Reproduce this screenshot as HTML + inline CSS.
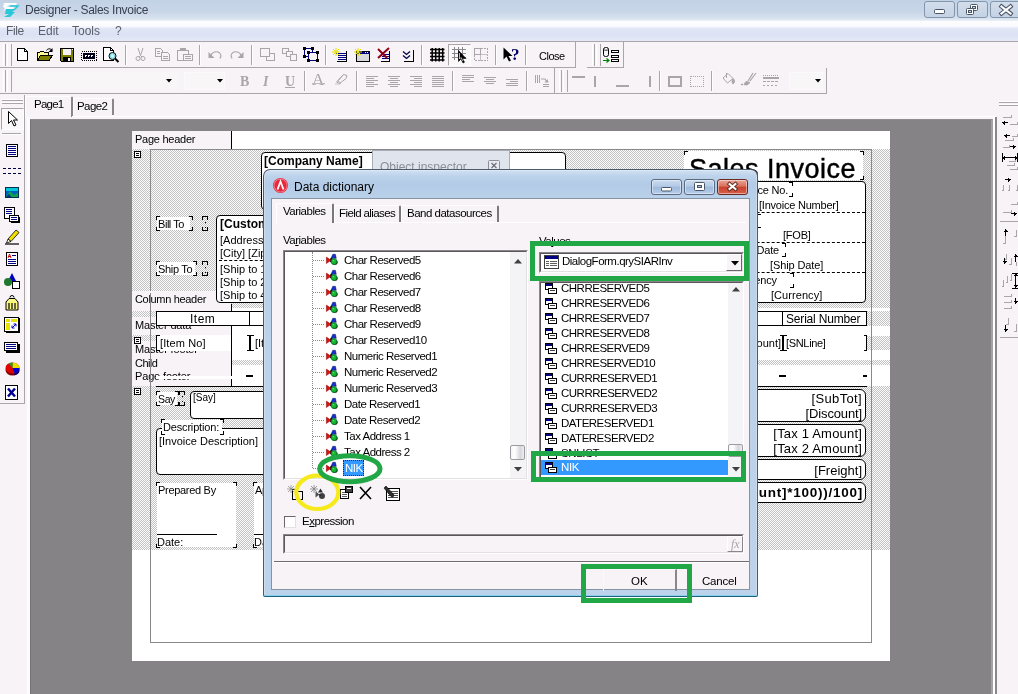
<!DOCTYPE html>
<html>
<head>
<meta charset="utf-8">
<title>Designer - Sales Invoice</title>
<style>
*{box-sizing:border-box;margin:0;padding:0}
html,body{width:1018px;height:694px;overflow:hidden}
body{position:relative;background:#f7f3f6;font-family:"Liberation Sans",sans-serif;font-size:11px;color:#000}
.a{position:absolute}
.t{position:absolute;white-space:nowrap;line-height:1}
.hatch{background-color:#dfdfdf;background-image:repeating-conic-gradient(#c2c2c2 0 25%,#fcfcfc 0 50%);background-size:2px 2px}
svg{position:absolute;overflow:visible}
/* ---------- main chrome ---------- */
#title{left:0;top:0;width:1018px;height:21px;background:linear-gradient(#c2d2e5 0,#c8d6e8 55%,#d9e3ef 90%,#eef2f8 100%)}
#menu{left:0;top:21px;width:1018px;height:20px;background:linear-gradient(#fdfdff 0,#fafbfe 5px,#e0e5f5 8px,#dce2f4 14px,#e4e8f6 19px)}
#tb1{left:0;top:41px;width:1018px;height:27px;border-top:1px solid #a9a5a9}
#tb2{left:0;top:68px;width:1018px;height:25px}
#canvas{left:30px;top:119px;width:963px;height:575px;background:#858385;border-top:1px solid #8f8d8f;border-left:1px solid #757375;border-right:2px solid #a4a2a4}
#page{left:132px;top:131px;width:758px;height:530px;background:#fff}
.sep{position:absolute;width:2px;border-left:1px solid #a9a5a9;border-right:1px solid #fff}
.grip{position:absolute;width:3px;border-left:1px solid #fff;border-right:1px solid #a9a5a9}
.grip:after{content:"";position:absolute;left:3px;top:0;bottom:0;width:3px;border-left:1px solid #fff;border-right:1px solid #a9a5a9}
.wb{top:1px;width:31px;height:17px;border:1px solid #8496ac;border-radius:3px;background:linear-gradient(#d3deec,#c4d2e4)}

/* ---------- report page ---------- */
.lb{position:absolute;left:132px;width:99px;height:18px;background:#f7f3f6}
.lb span{position:absolute;left:3px;top:3px;font-size:11px;letter-spacing:-.25px;white-space:nowrap;line-height:1}
.vl{position:absolute;left:231px;width:1px;background:#000}
.rt{position:absolute;white-space:nowrap;line-height:1;font-size:11px}
.wbx{position:absolute;background:#fff}
.rbx{position:absolute;background:#fff;border:1px solid #000;border-radius:4px}
.eq{position:absolute;left:134px;width:7px;height:7px;border:1px solid #000;background:#fff;box-sizing:border-box}
.eq:after{content:"";position:absolute;left:1px;top:1px;width:3px;height:3px;border-top:1px solid #000;border-bottom:1px solid #000;box-sizing:border-box}
.ck{position:absolute;width:4px;height:4px;border:0 solid #000}
/* ---------- dialog ---------- */
.dt{position:absolute;white-space:nowrap;line-height:1;font-size:11.500px;letter-spacing:-.5px}
.sunk{position:absolute;border:1px solid;border-color:#8a868a #fff #fff #8a868a}
.sunk:before{content:"";position:absolute;left:0;top:0;right:0;bottom:0;border:1px solid;border-color:#5a565a #e4e0e4 #e4e0e4 #5a565a}
.dtab{position:absolute;border-left:1px solid #fff;border-top:1px solid #fff;border-right:2px solid #7a767a;border-radius:2px 2px 0 0}
.cbtn{position:absolute;top:179px;height:16px;border:1px solid #5a6b80;border-radius:3px;box-shadow:0 0 0 1px rgba(255,255,255,.45) inset}
.ann{position:absolute;border:5px solid #22a746}

#dlg{left:263px;top:169px;width:495px;height:428px;border:1px solid #4a5a6c;border-bottom-color:#1f5f7a;border-radius:7px 7px 2px 2px;background:linear-gradient(#d2e1f2 0,#bdd3eb 6px,#b3cbe7 14px,#bad1ea 30px,#bdd3ec 100%);box-shadow:0 0 0 1px rgba(255,255,255,.25) inset,0 -1px 0 #5cc4ea inset}
#dcl{left:271px;top:198px;width:479px;height:392px;background:#f7f3f6;border:1px solid #8593a3}
</style>
</head>
<body>
<div id="root" style="position:absolute;left:0;top:0;width:1018px;height:694px;will-change:transform">
<!-- ============ TITLE BAR ============ -->
<div class="a" id="title"></div>
<div class="t" style="left:25px;top:4px;font-size:12px;color:#3a4050;letter-spacing:-.29px">Designer - Sales Invoice</div>

<!-- window buttons -->
<div class="a wb" style="left:924px"></div><div class="a wb" style="left:957px"></div><div class="a wb" style="left:990px;width:32px"></div>
<svg style="left:934px;top:9px" width="12" height="6"><rect x=".5" y=".5" width="10" height="4" rx="1" fill="#fff" stroke="#4a5566"/></svg>
<svg style="left:966px;top:4px" width="13" height="12"><rect x="4.5" y=".5" width="7" height="6" rx="1" fill="#fff" stroke="#4a5566"/><rect x="6.5" y="2.5" width="3" height="2" fill="#c9d6e6" stroke="#4a5566"/><rect x=".5" y="4.5" width="7" height="6" rx="1" fill="#fff" stroke="#4a5566"/><rect x="2.5" y="6.5" width="3" height="2" fill="#c9d6e6" stroke="#4a5566"/></svg>
<svg style="left:1000px;top:5px" width="12" height="10"><path d="M1.500 1.500l9 7M10.500 1.500l-9 7" stroke="#4a5566" stroke-width="4.200" stroke-linecap="square"/><path d="M1.500 1.500l9 7M10.500 1.500l-9 7" stroke="#fff" stroke-width="2.200" stroke-linecap="square"/></svg>
<!-- app icon -->
<svg style="left:1px;top:1px" width="20" height="18" viewBox="0 0 20 18"><path d="M3 2h13l-1 2H8l-2 2h7l-1 2H5l-3 3 2-4-2-1z" fill="#fff" opacity=".9"/><path d="M5 8h10l-4 3h3l-5 5H3l5-3H4z" fill="#27c9d8"/><path d="M9 5h8l-3 3" fill="none" stroke="#27c9d8" stroke-width="1.500"/></svg>
<!-- ============ MENU ============ -->
<div class="a" id="menu"></div>
<div class="t" style="left:6px;top:25px;font-size:12px;color:#5a5f6a;letter-spacing:-.4px">File</div>
<div class="t" style="left:38px;top:25px;font-size:12px;color:#5a5f6a">Edit</div>
<div class="t" style="left:72px;top:25px;font-size:12px;color:#5a5f6a">Tools</div>
<div class="t" style="left:115px;top:25px;font-size:12px;color:#5a5f6a">?</div>
<!-- ============ TOOLBARS ============ -->
<div class="a" id="tb1"></div>
<div class="a" id="tb2"></div>

<!-- row1 frames -->
<div class="a" style="left:0;top:67px;width:576px;height:1px;background:#a9a5a9"></div>
<div class="a" style="left:575px;top:42px;width:1px;height:26px;background:#a9a5a9"></div>
<div class="a" style="left:587px;top:67px;width:37px;height:1px;background:#a9a5a9"></div>
<div class="a" style="left:623px;top:42px;width:1px;height:26px;background:#a9a5a9"></div>
<div class="a" style="left:0;top:93px;width:827px;height:1px;background:#a9a5a9"></div>
<div class="a" style="left:554px;top:68px;width:1px;height:25px;background:#a9a5a9"></div>
<div class="a" style="left:826px;top:68px;width:1px;height:26px;background:#a9a5a9"></div>
<div class="grip" style="left:3px;top:44px;height:22px"></div>
<div class="grip" style="left:3px;top:70px;height:22px"></div>
<div class="grip" style="left:592px;top:44px;height:22px"></div>
<div class="grip" style="left:559px;top:70px;height:22px"></div>
<!-- row1 separators -->
<div class="sep" style="left:125px;top:45px;height:20px"></div>
<div class="sep" style="left:199px;top:45px;height:20px"></div>
<div class="sep" style="left:251px;top:45px;height:20px"></div>
<div class="sep" style="left:325px;top:45px;height:20px"></div>
<div class="sep" style="left:421px;top:45px;height:20px"></div>
<div class="sep" style="left:495px;top:45px;height:20px"></div>
<div class="sep" style="left:525px;top:45px;height:20px"></div>
<!-- row2 separators -->
<div class="sep" style="left:304px;top:71px;height:20px"></div>
<div class="sep" style="left:356px;top:71px;height:20px"></div>
<div class="sep" style="left:452px;top:71px;height:20px"></div>
<div class="sep" style="left:526px;top:71px;height:20px"></div>
<div class="sep" style="left:659px;top:71px;height:20px"></div>
<div class="sep" style="left:711px;top:71px;height:20px"></div>
<!-- ROW1 ICONS -->
<svg style="left:17px;top:48px" width="12" height="14" shape-rendering="crispEdges"><path d="M.5.5h7l3 3v9h-10z" fill="#fff" stroke="#000"/><path d="M7.500.5v3h3" fill="none" stroke="#000"/></svg>
<svg style="left:37px;top:47px" width="17" height="15" shape-rendering="crispEdges"><path d="M.5 13.500v-8h2l1-1h3l1 1h4v2" fill="#ffff99" stroke="#000"/><path d="M.5 13.500l3-5h12l-3.500 5z" fill="#808000" stroke="#000"/><path d="M9.500 3.500c1-2 4-2.500 5.500 0" fill="none" stroke="#000" shape-rendering="auto"/><path d="M15.500 1v4h-4z" fill="#000" shape-rendering="auto"/></svg>
<svg style="left:60px;top:48px" width="15" height="15" shape-rendering="crispEdges"><path d="M.5.5h13v13h-12l-1-1z" fill="#808000" stroke="#000"/><rect x="3" y="1" width="8" height="6" fill="#f7f3f6"/><rect x="3" y="9" width="8" height="5" fill="#000"/><rect x="8" y="10" width="2" height="3" fill="#f7f3f6"/><rect x="12" y="1" width="1" height="1" fill="#f7f3f6"/></svg>
<svg style="left:81px;top:51px" width="16" height="10" shape-rendering="crispEdges"><rect x=".5" y=".5" width="15" height="9" fill="none" stroke="#000" stroke-dasharray="1 1"/><rect x="2" y="2" width="12" height="6" fill="#000018"/><path d="M4 6v-2h2M7 6v-2h2M10 6v-2h2" stroke="#fff" fill="none"/></svg>
<svg style="left:103px;top:47px" width="17" height="16"><path d="M.5.5h7l3 3v10h-10z" fill="#fff" stroke="#000" shape-rendering="crispEdges"/><path d="M7.500.5v3h3" fill="none" stroke="#000" shape-rendering="crispEdges"/><circle cx="9.500" cy="9" r="3.500" fill="#c8f4f4" stroke="#000"/><circle cx="9.500" cy="9" r="2.300" fill="none" stroke="#58c8d8" stroke-width=".8"/><path d="M12 11.500l3.500 3.500" stroke="#000" stroke-width="2"/></svg>
<!-- cut copy paste (disabled) -->
<svg style="left:136px;top:48px" width="10" height="14" fill="none" stroke="#a9a5a9"><path d="M2 0l2.500 7.500M7 0l-2.500 7.500"/><circle cx="2" cy="10.500" r="2"/><circle cx="7" cy="10.500" r="2"/><path d="M4.500 7.500l-1.500 1.500M4.500 7.500l1.500 1.500"/></svg>
<svg style="left:155px;top:48px" width="16" height="14" shape-rendering="crispEdges" fill="none" stroke="#a9a5a9"><path d="M.5.5h5l2 2v6h-7z"/><path d="M2 3.500h3M2 5.500h3"/><path d="M6.500 4.500h6l2 2v6h-8z" fill="#f7f3f6"/><path d="M8 8.500h5M8 10.500h5"/></svg>
<svg style="left:177px;top:48px" width="17" height="14" shape-rendering="crispEdges" fill="none" stroke="#a9a5a9"><path d="M.5 2.500h11v10h-11z"/><path d="M3.500 2.500v-2h5v2" stroke-width="1"/><rect x="3" y="1" width="6" height="2" fill="#a9a5a9" stroke="none"/><path d="M6.500 6.500h9v6h-9z" fill="#f7f3f6"/><path d="M8 8.500h6M8 10.500h6"/></svg>
<!-- undo redo -->
<svg style="left:208px;top:50px" width="14" height="9" fill="none" stroke="#a9a5a9"><path d="M3 5c2-4 9-5 10 1l-1 2.500" stroke-width="1.200"/><path d="M.5 2v6h6z" fill="#a9a5a9" stroke="none"/></svg>
<svg style="left:230px;top:50px" width="14" height="9" fill="none" stroke="#a9a5a9"><path d="M11 5c-2-4-9-5-10 1l1 2.500" stroke-width="1.200"/><path d="M13.500 2v6h-6z" fill="#a9a5a9" stroke="none"/></svg>
<!-- bring front / send back (disabled) -->
<svg style="left:260px;top:48px" width="16" height="14" shape-rendering="crispEdges" fill="#f7f3f6" stroke="#a9a5a9"><rect x="6.500" y="5.500" width="8" height="7"/><rect x=".5" y=".5" width="9" height="8"/><rect x="2.500" y="2.500" width="5" height="4" stroke="none"/></svg>
<svg style="left:282px;top:48px" width="16" height="14" shape-rendering="crispEdges" fill="#f7f3f6" stroke="#a9a5a9"><rect x=".5" y=".5" width="6" height="5"/><rect x="4.500" y="3.500" width="6" height="5"/><rect x="8.500" y="6.500" width="6" height="6"/></svg>
<!-- select all -->
<svg style="left:303px;top:47px" width="17" height="16" shape-rendering="crispEdges"><rect x="1.500" y="1.500" width="8" height="8" fill="none" stroke="#000080"/><rect x="5.500" y="5.500" width="9" height="8" fill="#f7f3f6" stroke="#000080"/><g fill="#000"><rect x="0" y="0" width="3" height="3"/><rect x="8" y="0" width="3" height="3"/><rect x="0" y="8" width="3" height="3"/><rect x="4" y="4" width="3" height="3"/><rect x="13" y="4" width="3" height="3"/><rect x="4" y="12" width="3" height="3"/><rect x="13" y="12" width="3" height="3"/></g></svg>
<!-- new page -->
<svg style="left:332px;top:47px" width="16" height="16"><g shape-rendering="crispEdges"><path d="M4 6.500h10M6 8.500h8M6 10.500h8M6 12.500h8" stroke="#000080"/><path d="M14.500 4v10.500h-10" fill="none" stroke="#000"/></g><path d="M1 2l6 6M7 2l-6 6M4 1v8M0 5h8" stroke="#e8e000" stroke-width="1"/></svg>
<!-- new dialog -->
<svg style="left:354px;top:47px" width="17" height="16"><g shape-rendering="crispEdges"><rect x="2.500" y="4.500" width="13" height="10" fill="#d0d0d0" stroke="#000"/><rect x="3" y="5" width="12" height="2" fill="#000080"/><rect x="3" y="7" width="12" height="7" fill="#d8d8d8"/><rect x="11" y="5" width="1" height="1" fill="#fff"/><rect x="13" y="5" width="1" height="1" fill="#fff"/></g><path d="M1 2l6 6M7 2l-6 6M4 1v8M0 5h8" stroke="#e8e000" stroke-width="1"/></svg>
<!-- delete page -->
<svg style="left:377px;top:47px" width="15" height="16"><g shape-rendering="crispEdges"><path d="M5 7.500h7M5 9.500h7M5 11.500h7" stroke="#000080"/><path d="M12.500 4v10h-9" fill="none" stroke="#000"/></g><path d="M1 2l9 9M12 1l-11 10" stroke="#900018" stroke-width="2"/></svg>
<!-- page options -->
<svg style="left:402px;top:50px" width="12" height="12"><path d="M11.500 0v11.500h-10" fill="none" stroke="#000" shape-rendering="crispEdges"/><path d="M1 1.500l3.500 3 3.500-3M1 5.500l3.500 3 3.500-3" fill="none" stroke="#000040" stroke-width="1.300"/></svg>
<!-- grid -->
<svg style="left:430px;top:48px" width="15" height="14"><path d="M2.200 0v13.500M5.700 0v13.500M9.200 0v13.500M12.700 0v13.500M0 1.500h14.500M0 5h14.500M0 8.500h14.500M0 12h14.500" stroke="#000" stroke-width="1.500"/></svg>
<!-- grid align (pressed) -->
<div class="a" style="left:448px;top:44px;width:23px;height:22px;border-left:1px solid #a9a5a9;border-top:1px solid #a9a5a9;border-right:1px solid #fff;border-bottom:1px solid #fff;background:#fbf8fa"></div>
<svg style="left:452px;top:47px" width="17" height="17"><path d="M2.500 0v13M6.500 0v13M10.500 0v13M0 2.500h14M0 6.500h14M0 10.500h14" stroke="#8a868a" stroke-width="1.400" shape-rendering="crispEdges"/><path d="M6.500 3.500v11l2.500-2.500 2 4 1.500-.8-2-3.700h3.500z" fill="#000" stroke="#000" stroke-width=".6"/><path d="M7.500 6v6l1.500-1.500 2 3.500" fill="none" stroke="#fff" stroke-width=".7"/></svg>
<!-- fit grid disabled -->
<svg style="left:474px;top:48px" width="15" height="14" shape-rendering="crispEdges" fill="none" stroke="#a9a5a9"><rect x=".5" y=".5" width="13" height="12" stroke-dasharray="2 1"/><path d="M.5 6.500h13M6.500.5v12" stroke="#c4c0c4"/><path d="M.5.500h6v6h-6z"/></svg>
<!-- help cursor -->
<svg style="left:503px;top:47px" width="18" height="16"><path d="M.5.500v12l3-3 2.500 5 2-1-2.500-4.500h4z" fill="#000"/><text x="8" y="12.500" font-family="Liberation Serif" font-weight="bold" font-size="17" fill="#000060">?</text></svg>
<div class="t" style="left:539px;top:51px;font-size:11px;letter-spacing:-.5px">Close</div>
<!-- datasets icon -->
<svg style="left:602px;top:47px" width="18" height="17" shape-rendering="crispEdges"><rect x="1.500" y=".5" width="5" height="9" rx="2" fill="#f7f3f6" stroke="#000" shape-rendering="auto"/><path d="M1.500 2.500c1 1 4 1 5 0" fill="none" stroke="#000" shape-rendering="auto" stroke-width=".8"/><g fill="#f7f3f6" stroke="#000"><rect x="9.500" y="3.500" width="7" height="2"/><rect x="9.500" y="8.500" width="7" height="2"/><rect x="9.500" y="12.500" width="7" height="2"/></g><path d="M1 13.500h6M4.500 11.500l2.500 2-2.500 2" fill="none" stroke="#008000" shape-rendering="auto" stroke-width="1.200"/></svg>

<!-- ROW2 -->
<div class="a" style="left:15px;top:72px;width:162px;height:18px;background:#f9f6f8"></div>
<div class="a" style="left:184px;top:72px;width:41px;height:18px;background:#f9f6f8;border:1px solid #fbf9fb"></div>
<svg style="left:166px;top:79px" width="6" height="4"><path d="M0 0h6l-3 3.500z" fill="#000"/></svg>
<svg style="left:217px;top:79px" width="6" height="4"><path d="M0 0h6l-3 3.500z" fill="#000"/></svg>
<div class="t" style="left:240px;top:75px;font-family:'Liberation Serif',serif;font-weight:bold;font-size:14px;color:#a9a5a9">B</div>
<div class="t" style="left:263px;top:75px;font-family:'Liberation Serif',serif;font-weight:bold;font-style:italic;font-size:14px;color:#a9a5a9">I</div>
<div class="t" style="left:285px;top:75px;font-family:'Liberation Serif',serif;font-weight:bold;font-size:14px;color:#a9a5a9;border-bottom:1px solid #a9a5a9;height:13px">U</div>
<div class="t" style="left:312px;top:71px;font-family:'Liberation Serif',serif;font-size:17px;color:#a9a5a9">A</div>
<div class="a" style="left:312px;top:83px;width:13px;height:1px;background:#bdb9bd"></div>
<svg style="left:335px;top:73px" width="14" height="12" fill="none" stroke="#a9a5a9"><path d="M1.500 9l7-7.500 3.500 1-1 3-6.500 5z"/><path d="M3 8l3 2.500M8.500 1.500l-5 6"/><path d="M0 11h5" stroke="#c4c0c4"/></svg>
<svg style="left:366px;top:76px" width="12" height="11" shape-rendering="crispEdges" stroke="#a9a5a9"><path d="M0 .5h12M0 2.500h8M0 4.500h12M0 6.500h8M0 8.500h12M0 10.500h8"/></svg>
<svg style="left:388px;top:76px" width="12" height="11" shape-rendering="crispEdges" stroke="#a9a5a9"><path d="M0 .5h12M2 2.500h8M0 4.500h12M2 6.500h8M0 8.500h12M2 10.500h8"/></svg>
<svg style="left:410px;top:76px" width="12" height="11" shape-rendering="crispEdges" stroke="#a9a5a9"><path d="M0 .5h12M4 2.500h8M0 4.500h12M4 6.500h8M0 8.500h12M4 10.500h8"/></svg>
<svg style="left:432px;top:76px" width="12" height="11" shape-rendering="crispEdges" stroke="#a9a5a9"><path d="M0 .5h12M0 2.500h12M0 4.500h12M0 6.500h12M0 8.500h12M0 10.500h12"/></svg>
<svg style="left:462px;top:75px" width="12" height="7" shape-rendering="crispEdges" stroke="#a9a5a9"><path d="M0 .5h12M0 2.500h12M0 4.500h8M0 6.500h12" /></svg>
<svg style="left:484px;top:77px" width="12" height="7" shape-rendering="crispEdges" stroke="#a9a5a9"><path d="M0 .5h12M2 2.500h8M0 4.500h12M2 6.500h8"/></svg>
<svg style="left:506px;top:79px" width="12" height="7" shape-rendering="crispEdges" stroke="#a9a5a9"><path d="M0 .5h12M4 2.500h8M0 4.500h12M0 6.500h12"/></svg>
<svg style="left:534px;top:74px" width="16" height="14" fill="none" stroke="#a9a5a9"><path d="M1.500 1v8M3.500 1v8M5.500 1v8" shape-rendering="crispEdges"/><path d="M7 5h4l2 3" stroke-width="1.200"/><path d="M10.500 8.500h4l-1 -3.500z" fill="#a9a5a9" stroke="none"/><path d="M9 10.500h6M9 12.500h6" shape-rendering="crispEdges"/></svg>
<!-- frame tools -->
<div class="a" style="left:572px;top:76px;width:13px;height:2px;background:#a9a5a9"></div>
<div class="a" style="left:594px;top:76px;width:2px;height:11px;background:#a9a5a9"></div>
<div class="a" style="left:616px;top:85px;width:13px;height:2px;background:#a9a5a9"></div>
<div class="a" style="left:649px;top:76px;width:2px;height:11px;background:#a9a5a9"></div>
<div class="a" style="left:668px;top:76px;width:14px;height:11px;border:2px solid #a9a5a9"></div>
<div class="a" style="left:690px;top:76px;width:14px;height:11px;border:1px dotted #a9a5a9"></div>
<svg style="left:720px;top:72px" width="16" height="14" fill="none" stroke="#a9a5a9"><path d="M3 6l5-4.500 5 5-5.500 4.500z" fill="#f7f3f6"/><path d="M6.500 1v5"/><path d="M13 6.500c2 1.500 2 4 0 5.500-1.500-2-1-4 0-5.500z" fill="#a9a5a9"/></svg>
<svg style="left:741px;top:72px" width="17" height="14" fill="none" stroke="#a9a5a9"><path d="M15 1l-6 8M12 1l-5 8" stroke-width="1.200"/><path d="M5 9.500l4 1-3 2.500-3-.5z" fill="#a9a5a9"/><path d="M0 12.500h2" stroke-width="1.500"/></svg>
<svg style="left:763px;top:75px" width="16" height="12" shape-rendering="crispEdges" stroke="#a9a5a9" fill="none"><path d="M0 .5h16" stroke-dasharray="1 1"/><path d="M0 3h16" stroke-width="2"/><path d="M0 6.500h16" stroke-dasharray="3 1"/><path d="M0 10.500h16" stroke-dasharray="2 2"/></svg>
<div class="a" style="left:789px;top:72px;width:34px;height:18px;background:#f9f6f8;border:1px solid #fbf9fb"></div>
<svg style="left:815px;top:79px" width="6" height="4"><path d="M0 0h6l-3 3.500z" fill="#000"/></svg>
<!-- ============ TABS ============ -->
<div class="a" style="left:25px;top:96px;width:48px;height:21px;border-left:1px solid #fff;border-top:1px solid #fff;border-right:2px solid #8a868a;border-radius:2px 2px 0 0"></div>
<div class="a" style="left:73px;top:98px;width:41px;height:17px;border-left:1px solid #fff;border-top:1px solid #fff;border-right:2px solid #8a868a;border-radius:2px 2px 0 0"></div>
<div class="a" style="left:72px;top:116px;width:924px;height:1px;background:#fff"></div>
<div class="t" style="left:34px;top:99px;font-size:11.500px;letter-spacing:-.77px">Page1</div>
<div class="t" style="left:77px;top:101px;font-size:11.500px;letter-spacing:-.57px">Page2</div>
<!-- ============ LEFT TOOLBAR ============ -->
<div class="a" style="left:0;top:95px;width:25px;height:309px;border-right:1px solid #a9a5a9;border-bottom:1px solid #a9a5a9"></div>
<div class="a" style="left:27px;top:117px;width:3px;height:577px;background:#fdfcfd"></div>
<div class="a" style="left:2px;top:99px;width:21px;height:2px;border-top:1px solid #fff;border-bottom:1px solid #a9a5a9"></div>
<div class="a" style="left:2px;top:102px;width:21px;height:2px;border-top:1px solid #fff;border-bottom:1px solid #a9a5a9"></div>
<div class="a" style="left:1px;top:108px;width:23px;height:22px;border-left:1px solid #a9a5a9;border-top:1px solid #a9a5a9;border-right:1px solid #fff;border-bottom:1px solid #fff;background:#fbf8fa"></div>
<svg style="left:8px;top:111px" width="10" height="16"><path d="M.5.500v12l3-3 2.500 5.500 2-1-2.500-5h4z" fill="#fff" stroke="#000"/></svg>
<div class="a" style="left:2px;top:133px;width:19px;height:2px;border-top:1px solid #a9a5a9;border-bottom:1px solid #fff"></div>
<svg style="left:6px;top:144px" width="12" height="13" shape-rendering="crispEdges"><rect x=".5" y=".5" width="11" height="12" fill="#fff" stroke="#000"/><path d="M2 2.500h8M2 4.500h8M2 6.500h8M2 8.500h8M2 10.500h8" stroke="#000080"/></svg>
<svg style="left:3px;top:167px" width="18" height="7" shape-rendering="crispEdges"><path d="M0 1h18M0 6h18" stroke="#000040" stroke-width="1" stroke-dasharray="3 2"/></svg>
<svg style="left:5px;top:187px" width="14" height="11"><rect x="0" y="0" width="14" height="11" fill="#0060c0"/><rect x="0" y="0" width="14" height="4" fill="#00c8d8"/><path d="M0 11l5-7 4 4 5-3v6z" fill="#10a050"/><path d="M0 11l4-4 3 4z" fill="#003080"/><rect x=".5" y=".5" width="13" height="10" fill="none" stroke="#003050"/></svg>
<svg style="left:4px;top:207px" width="16" height="17" shape-rendering="crispEdges"><rect x=".5" y=".5" width="10" height="11" fill="#fff" stroke="#000"/><path d="M2 2.500h6M2 4.500h6M2 6.500h6" stroke="#000080"/><rect x="5.500" y="8.500" width="9" height="6" fill="#fff" stroke="#000"/><path d="M7 10.500h6M7 12.500h6" stroke="#000080"/><path d="M15.500 10v5.500h-9" fill="none" stroke="#000"/></svg>
<svg style="left:5px;top:229px" width="15" height="16"><path d="M3 10l8-9 3 2.500-8 9z" fill="#f0e000" stroke="#000" stroke-width=".8"/><path d="M3 10l3 2.500-4.500 1.500z" fill="#fff" stroke="#000" stroke-width=".8"/><path d="M0 15h14" stroke="#000" stroke-width="1.200"/></svg>
<svg style="left:6px;top:252px" width="12" height="14" shape-rendering="crispEdges"><rect x=".5" y=".5" width="11" height="13" fill="#fff" stroke="#000"/><path d="M6 3.500h4M2 7.500h8M2 9.500h8M2 11.500h8" stroke="#000080"/><path d="M2 6l1.500-4 1.500 4M2.500 4.500h2" stroke="#d00000" fill="none" shape-rendering="auto"/></svg>
<svg style="left:4px;top:273px" width="16" height="16"><path d="M8 0l4 8h-8z" fill="#0000c0"/><circle cx="4" cy="9" r="4" fill="#207830"/><rect x="8.500" y="8.500" width="7" height="7" fill="#fff" stroke="#000" shape-rendering="crispEdges"/></svg>
<svg style="left:5px;top:295px" width="14" height="16"><path d="M5 2.500a2 2 0 0 1 4 0" fill="none" stroke="#000"/><path d="M1 7l3-3.500h6l3 3.500v8h-12z" fill="#f8f880" stroke="#000"/><path d="M4 8v6M7 8v6M10 8v6" stroke="#000" stroke-width="1.200"/></svg>
<svg style="left:4px;top:317px" width="16" height="16" shape-rendering="crispEdges"><rect x=".5" y=".5" width="14" height="14" fill="#fff" stroke="#000"/><path d="M15.500 1v14.500h-14" fill="none" stroke="#000"/><rect x="2" y="2" width="4" height="3" fill="#e8e000"/><rect x="7" y="2" width="6" height="3" fill="#e8e000"/><rect x="2" y="6" width="4" height="7" fill="#e8e000"/><path d="M8 11l4-4M12 7h-2.500M12 7v2.500M8 11h2.500M8 11v-2.500" stroke="#0000c0" fill="none" shape-rendering="auto"/></svg>
<svg style="left:4px;top:342px" width="16" height="11" shape-rendering="crispEdges"><rect x=".5" y=".5" width="13" height="8" fill="#fff" stroke="#000"/><path d="M2 2.500h10M2 4.500h10M2 6.500h10" stroke="#000080"/><path d="M15 2v8h-13" fill="none" stroke="#000" stroke-width="2"/></svg>
<svg style="left:5px;top:362px" width="15" height="14"><ellipse cx="7.500" cy="8" rx="7" ry="5.500" fill="#800000"/><ellipse cx="7.500" cy="6" rx="7" ry="5.500" fill="#e00000"/><path d="M7.500 6V.5a7 5.500 0 0 1 7 5.500z" fill="#e8e000"/><path d="M7.500 6V.5a7 5.500 0 0 0-4 1z" fill="#20a020"/><path d="M7.500 6h7a7 5.500 0 0 1-5 5.300z" fill="#0000d0"/><path d="M9.500 11.300a7 5.500 0 0 0 5-5.300v2a7 5.500 0 0 1-5 5.300z" fill="#000080"/></svg>
<svg style="left:5px;top:385px" width="13" height="15" shape-rendering="crispEdges"><rect x=".5" y=".5" width="12" height="14" fill="#fff" stroke="#000"/><path d="M3 3.500l7 8M10 3.500l-7 8" stroke="#000090" stroke-width="2.500" shape-rendering="auto"/></svg>
<!-- ============ RIGHT TOOLBAR ============ -->
<div class="a" style="left:995px;top:117px;width:2px;height:577px;background:#8a868a"></div>
<div class="a" style="left:993px;top:117px;width:2px;height:577px;background:#fff"></div>
<div class="a" style="left:999px;top:101px;width:19px;height:2px;border-top:1px solid #fff;border-bottom:1px solid #a9a5a9"></div>
<div class="a" style="left:999px;top:104px;width:19px;height:2px;border-top:1px solid #fff;border-bottom:1px solid #a9a5a9"></div>
<svg style="left:1000px;top:112px" width="18" height="226" fill="none" shape-rendering="crispEdges">
<g stroke="#a9a5a9"><path d="M3 5.500h8v-3M10 12.500h7v-3"/><path d="M12 24.500h5v-3M5 28.500h8v-3M3 35.500h6v-3"/><path d="M9 49.500h6v-3M7 53.500h7v-3M10 57.500h7v-3"/><path d="M3.500 73v5.500h-2M9.500 73v5.500h-2M17.500 73v5.500h-2"/><path d="M11 92.500h6v-3M3 100.500h8v-3"/>
<path d="M5 124v7.500h-2M16.500 118v6.500h-3"/><path d="M6.500 142v5.500h-3M11.500 146v6.500h-3M16.500 150v4"/><path d="M3.500 168v6.500h-2M7.500 164v6.500h-2M11.500 162v6.500h-2"/><path d="M4 184.500h7v-3M4 190.500h7v-3M4 196.500h7v-3"/><path d="M8.500 206v6.500h-3M16.500 212v7.500h-3"/></g>
<path d="M0 109.500h18M0 225.500h18" stroke="#a9a5a9"/>
<g stroke="#000" stroke-width="1"><path d="M2 10.500h6M4.500 8.500v4M3.500 9.500v2"/><path d="M4 23.500h6M6.500 21.500v4M5.500 22.500v2M10 34.500h6M13.500 32.500v4M14.500 33.500v2"/><path d="M2 45.500h16M4.500 43.500v4M3.500 44.500v2M15.500 43.500v4M16.500 44.500v2M2.500 41v9M17.500 41v9"/><path d="M5 67.500h6M8.500 65.500v4M9.500 66.500v2"/><path d="M11 101.500h6M14.500 99.500v4M15.500 100.500v2"/>
<path d="M5.500 117v7M3.500 119.500h4M4.500 118.500h2"/><path d="M4.500 146v6M2.500 149.500h4M3.500 150.500h2M15.500 142v8M13.500 144.500h4M14.500 143.500h2"/><path d="M15.500 161v15M13.500 163.500h4M14.500 162.500h2M13.500 173.500h4M14.500 174.500h2M12 161.500h7M12 176.500h7"/><path d="M15.500 186v6M13.500 189.500h4M14.500 190.500h2"/><path d="M5.500 213v7M3.500 217.500h4M4.500 218.500h2"/></g>
</svg>
<!-- ============ CANVAS ============ -->
<div class="a" id="canvas"></div>
<div class="a" id="page"></div>

<!-- bands -->
<div class="a hatch" style="left:132px;top:149px;width:758px;height:159px"></div>
<div class="a hatch" style="left:132px;top:311px;width:758px;height:15px"></div>
<div class="a hatch" style="left:132px;top:336px;width:758px;height:14px"></div>
<div class="a hatch" style="left:132px;top:360px;width:758px;height:5px"></div>
<div class="a hatch" style="left:132px;top:386px;width:758px;height:164px"></div>
<!-- inner frame -->
<div class="a" style="left:150px;top:149px;width:722px;height:494px;border:1px solid #8a888a"></div>
<!-- labels -->
<div class="lb" style="top:131px"><span>Page header</span></div>
<div class="lb" style="top:291px;height:20px"><span style="letter-spacing:-.32px">Column header</span></div>
<div class="lb" style="top:317px"><span style="letter-spacing:-.18px">Master data</span></div>
<div class="a hatch" style="left:132px;top:335px;width:99px;height:6px"></div>
<div class="lb" style="top:341px"><span style="letter-spacing:-.15px">Master footer</span></div>
<div class="lb" style="top:355px"><span style="letter-spacing:-.55px">Child</span></div>
<div class="lb" style="top:368px"><span style="letter-spacing:-.15px">Page footer</span></div>
<div class="a" style="left:150px;top:293px;width:1px;height:93px;background:#8a888a"></div>
<div class="vl" style="top:131px;height:18px"></div>
<div class="eq" style="top:151px"></div>
<div class="eq" style="top:337px"></div>
<div class="eq" style="top:388px"></div>
<div class="wbx" style="left:157px;top:217px;width:33px;height:13px"></div><div class="ck" style="left:156px;top:216px;border-left-width:1px;border-top-width:1px"></div><div class="ck" style="left:189px;top:216px;border-right-width:1px;border-top-width:1px"></div><div class="ck" style="left:156px;top:227px;border-left-width:1px;border-bottom-width:1px"></div><div class="ck" style="left:189px;top:227px;border-right-width:1px;border-bottom-width:1px"></div><div class="rt" style="left:158px;top:219px;letter-spacing:-.45px">Bill To</div><div class="ck" style="left:202px;top:216px;border-left-width:1px;border-top-width:1px"></div><div class="ck" style="left:204px;top:216px;border-right-width:1px;border-top-width:1px"></div><div class="ck" style="left:202px;top:227px;border-left-width:1px;border-bottom-width:1px"></div><div class="ck" style="left:204px;top:227px;border-right-width:1px;border-bottom-width:1px"></div><div class="rt" style="left:204px;top:219px">:</div><div class="wbx" style="left:157px;top:262px;width:38px;height:13px"></div><div class="ck" style="left:156px;top:261px;border-left-width:1px;border-top-width:1px"></div><div class="ck" style="left:193px;top:261px;border-right-width:1px;border-top-width:1px"></div><div class="ck" style="left:156px;top:272px;border-left-width:1px;border-bottom-width:1px"></div><div class="ck" style="left:193px;top:272px;border-right-width:1px;border-bottom-width:1px"></div><div class="rt" style="left:158px;top:264px;letter-spacing:-.3px">Ship To</div><div class="ck" style="left:202px;top:261px;border-left-width:1px;border-top-width:1px"></div><div class="ck" style="left:204px;top:261px;border-right-width:1px;border-top-width:1px"></div><div class="ck" style="left:202px;top:272px;border-left-width:1px;border-bottom-width:1px"></div><div class="ck" style="left:204px;top:272px;border-right-width:1px;border-bottom-width:1px"></div><div class="rt" style="left:204px;top:264px">:</div>
<!-- company box -->
<div class="rbx" style="left:261px;top:152px;width:305px;height:58px"></div>
<div class="rt" style="left:264px;top:155px;font-weight:bold;font-size:12px">[Company Name]</div>
<!-- object inspector (hidden behind) -->
<div class="a" style="left:372px;top:150px;width:138px;height:22px;background:#e0e5ed;border:1px solid #a8aeb8;border-bottom:0"></div>
<div class="rt" style="left:380px;top:161px;font-size:12px;color:#8a8e98">Object inspector</div>
<svg style="left:488px;top:160px" width="12" height="11"><rect x=".5" y=".5" width="11" height="10" rx="1" fill="#e8eaf0" stroke="#8a8e98"/><path d="M3.500 3l5 5M8.500 3l-5 5" stroke="#6a6e78" stroke-width="1.200"/></svg>
<!-- customer box -->
<div class="rbx" style="left:216px;top:215px;width:120px;height:88px"></div>
<div class="a" style="left:219px;top:260px;width:100px;height:0;border-top:1px dashed #000"></div>
<div class="rt" style="left:220px;top:218px;font-weight:bold;font-size:12px">[Customer Name]</div>
<div class="rt" style="left:220px;top:235px">[Address]</div>
<div class="rt" style="left:220px;top:248px">[City] [Zip]</div>
<div class="rt" style="left:220px;top:264px">[Ship to 1]</div>
<div class="rt" style="left:220px;top:277px">[Ship to 2]</div>
<div class="rt" style="left:220px;top:290px">[Ship to 4]</div>
<div class="vl" style="top:304px;height:82px"></div>
<!-- Sales Invoice title -->
<div class="wbx" style="left:684px;top:151px;width:179px;height:29px"></div>
<div class="rt" style="left:689px;top:156px;font-size:27px;letter-spacing:.5px;-webkit-text-stroke:.45px #000">Sales Invoice</div>
<div class="ck" style="left:684px;top:151px;border-left-width:1px;border-top-width:1px"></div><div class="ck" style="left:860px;top:151px;border-right-width:1px;border-top-width:1px"></div><div class="ck" style="left:860px;top:176px;border-right-width:1px;border-bottom-width:1px"></div>
<!-- invoice info box -->
<div class="rbx" style="left:600px;top:181px;width:266px;height:122px"></div>
<div class="a" style="left:601px;top:212px;width:264px;height:0;border-top:1px dashed #000"></div>
<div class="a" style="left:601px;top:242px;width:264px;height:0;border-top:1px dashed #000"></div>
<div class="a" style="left:601px;top:272px;width:264px;height:0;border-top:1px dashed #000"></div>
<div class="rt" style="right:230px;top:185px;letter-spacing:-.2px">Invoice No.</div>
<div class="rt" style="left:759px;top:200px;letter-spacing:-.22px">[Invoice Number]</div>
<div class="rt" style="left:783px;top:230px;letter-spacing:-.23px">[FOB]</div>
<div class="rt" style="right:239px;top:245px;letter-spacing:-.2px">Ship Date</div>
<div class="rt" style="left:770px;top:260px;letter-spacing:-.11px">[Ship Date]</div>
<div class="rt" style="right:241px;top:275px;letter-spacing:-.1px">Currency</div>
<div class="rt" style="left:771px;top:290px;letter-spacing:.06px">[Currency]</div>
<div class="ck" style="left:789px;top:182px;border-right-width:1px;border-top-width:1px"></div><div class="ck" style="left:789px;top:193px;border-right-width:1px;border-bottom-width:1px"></div><div class="ck" style="left:757px;top:214px;border-left-width:1px;border-top-width:1px"></div><div class="ck" style="left:757px;top:224px;border-left-width:1px;border-bottom-width:1px"></div><div class="ck" style="left:782px;top:243px;border-right-width:1px;border-top-width:1px"></div><div class="ck" style="left:782px;top:253px;border-right-width:1px;border-bottom-width:1px"></div><div class="ck" style="left:790px;top:273px;border-right-width:1px;border-top-width:1px"></div><div class="ck" style="left:790px;top:284px;border-right-width:1px;border-bottom-width:1px"></div>
<!-- column header row -->
<div class="a" style="left:156px;top:311px;width:94px;height:15px;background:#fff;border:1px solid #000"></div>
<div class="a" style="left:249px;top:311px;width:534px;height:15px;background:#fff;border:1px solid #000"></div>
<div class="a" style="left:782px;top:311px;width:85px;height:15px;background:#fff;border:1px solid #000"></div>
<div class="rt" style="left:190px;top:313px;font-size:12px;letter-spacing:.5px">Item</div>
<div class="rt" style="left:786px;top:313px;font-size:12px;letter-spacing:-.18px">Serial Number</div>
<!-- master data row -->
<div class="wbx" style="left:156px;top:335px;width:711px;height:16px"></div>
<div class="rt" style="left:160px;top:338px;letter-spacing:.13px">[Item No]</div>
<div class="rt" style="left:255px;top:338px">[Item Description]</div>
<div class="rt" style="left:737px;top:338px">[Amount]</div>
<div class="rt" style="left:786px;top:338px;letter-spacing:-.33px">[SNLine]</div>
<svg style="left:156px;top:335px" width="712" height="16" shape-rendering="crispEdges" fill="none" stroke="#000"><path d="M3.500.5h-3v15h3M90.500.5h3v15h-3M97.500.5h-3v15h3M623.500.5h3v15h-3M630.500.5h-3v15h3M707.500.5h3v15h-3"/></svg>
<div class="vl" style="top:326px;height:60px"></div>
<!-- child row -->
<div class="wbx" style="left:156px;top:376px;width:711px;height:3px"></div>
<div class="a" style="left:246px;top:375px;width:7px;height:2px;background:#000"></div>
<div class="a" style="left:779px;top:375px;width:7px;height:2px;background:#000"></div>
<div class="a" style="left:863px;top:375px;width:4px;height:2px;background:#000"></div>
<div class="a" style="left:156px;top:386px;width:711px;height:1px;background:#000"></div>
<!-- footer objects -->
<div class="wbx" style="left:157px;top:392px;width:20px;height:13px"></div><div class="ck" style="left:156px;top:391px;border-left-width:1px;border-top-width:1px"></div><div class="ck" style="left:175px;top:391px;border-right-width:1px;border-top-width:1px"></div><div class="ck" style="left:156px;top:402px;border-left-width:1px;border-bottom-width:1px"></div><div class="ck" style="left:175px;top:402px;border-right-width:1px;border-bottom-width:1px"></div><div class="ck" style="left:179px;top:391px;border-left-width:1px;border-top-width:1px"></div><div class="ck" style="left:181px;top:391px;border-right-width:1px;border-top-width:1px"></div><div class="ck" style="left:179px;top:402px;border-left-width:1px;border-bottom-width:1px"></div><div class="ck" style="left:181px;top:402px;border-right-width:1px;border-bottom-width:1px"></div><div class="rt" style="left:158px;top:394px;font-size:10.500px;letter-spacing:-.36px">Say</div><div class="rt" style="left:181px;top:393px">:</div>
<div class="rbx" style="left:190px;top:391px;width:500px;height:28px"></div>
<div class="rt" style="left:193px;top:393px;font-size:10px">[Say]</div>
<div class="rbx" style="left:156px;top:428px;width:534px;height:47px"></div>
<div class="wbx" style="left:162px;top:420px;width:60px;height:14px"></div>
<div class="rt" style="left:163px;top:422px;letter-spacing:-.17px">Description:</div>
<div class="rt" style="left:159px;top:436px">[Invoice Description]</div>
<div class="ck" style="left:161px;top:419px;border-left-width:1px;border-top-width:1px"></div><div class="ck" style="left:220px;top:419px;border-right-width:1px;border-top-width:1px"></div><div class="ck" style="left:161px;top:431px;border-left-width:1px;border-bottom-width:1px"></div><div class="ck" style="left:220px;top:431px;border-right-width:1px;border-bottom-width:1px"></div>
<div class="wbx" style="left:157px;top:483px;width:79px;height:64px"></div>
<div class="rt" style="left:158px;top:485px;letter-spacing:-.3px">Prepared By</div>
<div class="a" style="left:157px;top:534px;width:60px;height:1px;background:#000"></div>
<div class="rt" style="left:157px;top:537px">Date:</div>
<div class="wbx" style="left:254px;top:483px;width:79px;height:64px"></div>
<div class="rt" style="left:255px;top:485px;letter-spacing:-.3px">Approved By</div>
<div class="a" style="left:254px;top:534px;width:60px;height:1px;background:#000"></div><div class="rt" style="left:254px;top:537px">Date:</div>
<div class="ck" style="left:156px;top:482px;border-left-width:1px;border-top-width:1px"></div><div class="ck" style="left:233px;top:482px;border-right-width:1px;border-top-width:1px"></div><div class="ck" style="left:156px;top:544px;border-left-width:1px;border-bottom-width:1px"></div><div class="ck" style="left:233px;top:544px;border-right-width:1px;border-bottom-width:1px"></div><div class="ck" style="left:253px;top:482px;border-left-width:1px;border-top-width:1px"></div><div class="ck" style="left:330px;top:482px;border-right-width:1px;border-top-width:1px"></div><div class="ck" style="left:253px;top:544px;border-left-width:1px;border-bottom-width:1px"></div><div class="ck" style="left:330px;top:544px;border-right-width:1px;border-bottom-width:1px"></div>
<!-- totals -->
<div class="rbx" style="left:600px;top:389px;width:266px;height:33px;border-radius:6px"></div>
<div class="rbx" style="left:600px;top:424px;width:266px;height:33px;border-radius:6px"></div>
<div class="rbx" style="left:600px;top:459px;width:266px;height:21px;border-radius:6px"></div>
<div class="rbx" style="left:600px;top:482px;width:266px;height:21px;border-radius:6px"></div>
<div class="rt" style="right:156px;top:392px;font-size:13px;letter-spacing:.34px">[SubTot]</div>
<div class="rt" style="right:156px;top:407px;font-size:13px;letter-spacing:-.14px">[Discount]</div>
<div class="rt" style="right:156px;top:427px;font-size:13px;letter-spacing:.19px">[Tax 1 Amount]</div>
<div class="rt" style="right:156px;top:442px;font-size:13px;letter-spacing:.19px">[Tax 2 Amount]</div>
<div class="rt" style="right:156px;top:464px;font-size:13px">[Freight]</div>
<div class="rt" style="right:155px;top:486px;font-size:13.500px;font-weight:bold;letter-spacing:.75px">[Tax2Amount]*100))/100]</div>
<!-- ============ DIALOG ============ -->
<div class="a" id="dlg"></div>
<div class="a" id="dcl"></div>

<!-- dialog title -->
<svg style="left:273px;top:178px" width="16" height="16"><circle cx="7.500" cy="7.500" r="7.500" fill="#e8283c"/><circle cx="7.500" cy="7.500" r="6.500" fill="none" stroke="#f47a86" stroke-width="1"/><path d="M4.500 11.500l3-8 3 8" fill="none" stroke="#fff" stroke-width="1.800" stroke-linejoin="miter"/></svg>
<div class="t" style="left:294px;top:181px;font-size:12px;color:#000">Data dictionary</div>
<div class="cbtn" style="left:651px;width:31px;background:linear-gradient(#c9daee 0,#b4cae6 45%,#9db9dd 50%,#b6cdea 100%)"></div>
<div class="cbtn" style="left:684px;width:31px;background:linear-gradient(#c9daee 0,#b4cae6 45%,#9db9dd 50%,#b6cdea 100%)"></div>
<div class="cbtn" style="left:717px;width:31px;background:linear-gradient(#e9a595 0,#d9705c 45%,#c7422c 50%,#d6604a 100%);border-color:#6a2a22"></div>
<svg style="left:661px;top:187px" width="12" height="5"><rect x=".5" y=".5" width="10" height="3.500" rx="1" fill="#fff" stroke="#4a5566"/></svg>
<svg style="left:694px;top:182px" width="12" height="10"><rect x=".5" y=".5" width="10" height="8" rx="1" fill="#fff" stroke="#4a5566"/><rect x="3.500" y="3.500" width="4" height="2" fill="#9db9dd" stroke="#4a5566"/></svg>
<svg style="left:727px;top:182px" width="12" height="10"><path d="M2.500 2l6 5M8.500 2l-6 5" stroke="#5a2a22" stroke-width="3.800" stroke-linecap="square"/><path d="M2.500 2l6 5M8.500 2l-6 5" stroke="#fff" stroke-width="2" stroke-linecap="square"/></svg>
<!-- dialog tabs -->
<div class="a" style="left:275px;top:222px;width:471px;height:1px;background:#fff"></div>
<div class="dtab" style="left:276px;top:203px;width:58px;height:20px;background:#f7f3f6"></div>
<div class="dtab" style="left:334px;top:205px;width:67px;height:17px"></div>
<div class="dtab" style="left:401px;top:205px;width:98px;height:17px"></div>
<div class="dt" style="left:283px;top:206px">Variables</div>
<div class="dt" style="left:339px;top:208px;letter-spacing:-.6px">Field aliases</div>
<div class="dt" style="left:407px;top:208px">Band datasources</div>
<div class="dt" style="left:283px;top:235px">Va<u>r</u>iables</div>
<div class="dt" style="left:539px;top:236px">Va<u>l</u>ues</div>
<!-- tree -->
<div class="sunk" style="left:283px;top:250px;width:245px;height:230px;background:#fff"></div>
<div class="a" style="left:312px;top:252px;width:0;height:216px;border-left:1px dotted #8a868a"></div>
<div class="a" style="left:313px;top:260px;width:11px;height:0;border-top:1px dotted #8a868a"></div><svg style="left:325.500px;top:254px" width="12" height="11"><path d="M4 4.500l2.500-1v5.500l-2.500-1z" fill="#101010"/><ellipse cx="8.600" cy="8.200" rx="3" ry="2.600" fill="#102010"/><path d="M.4 3v6.500l4.600-3.250z" fill="#e01010" stroke="#7a0808" stroke-width=".5"/><path d="M5 4.300l1.800-4h2.600l.9 4z" fill="#1830c8" stroke="#081060" stroke-width=".5"/><circle cx="8" cy="7.500" r="2.900" fill="#10b830" stroke="#085818" stroke-width=".5"/><circle cx="7.300" cy="6.800" r="1" fill="#60e080" opacity=".7"/></svg><div class="dt" style="left:344px;top:255px">Char Reserved5</div><div class="a" style="left:313px;top:276px;width:11px;height:0;border-top:1px dotted #8a868a"></div><svg style="left:325.500px;top:270px" width="12" height="11"><path d="M4 4.500l2.500-1v5.500l-2.500-1z" fill="#101010"/><ellipse cx="8.600" cy="8.200" rx="3" ry="2.600" fill="#102010"/><path d="M.4 3v6.500l4.600-3.250z" fill="#e01010" stroke="#7a0808" stroke-width=".5"/><path d="M5 4.300l1.800-4h2.600l.9 4z" fill="#1830c8" stroke="#081060" stroke-width=".5"/><circle cx="8" cy="7.500" r="2.900" fill="#10b830" stroke="#085818" stroke-width=".5"/><circle cx="7.300" cy="6.800" r="1" fill="#60e080" opacity=".7"/></svg><div class="dt" style="left:344px;top:271px">Char Reserved6</div><div class="a" style="left:313px;top:292px;width:11px;height:0;border-top:1px dotted #8a868a"></div><svg style="left:325.500px;top:286px" width="12" height="11"><path d="M4 4.500l2.500-1v5.500l-2.500-1z" fill="#101010"/><ellipse cx="8.600" cy="8.200" rx="3" ry="2.600" fill="#102010"/><path d="M.4 3v6.500l4.600-3.250z" fill="#e01010" stroke="#7a0808" stroke-width=".5"/><path d="M5 4.300l1.800-4h2.600l.9 4z" fill="#1830c8" stroke="#081060" stroke-width=".5"/><circle cx="8" cy="7.500" r="2.900" fill="#10b830" stroke="#085818" stroke-width=".5"/><circle cx="7.300" cy="6.800" r="1" fill="#60e080" opacity=".7"/></svg><div class="dt" style="left:344px;top:287px">Char Reserved7</div><div class="a" style="left:313px;top:308px;width:11px;height:0;border-top:1px dotted #8a868a"></div><svg style="left:325.500px;top:302px" width="12" height="11"><path d="M4 4.500l2.500-1v5.500l-2.500-1z" fill="#101010"/><ellipse cx="8.600" cy="8.200" rx="3" ry="2.600" fill="#102010"/><path d="M.4 3v6.500l4.600-3.250z" fill="#e01010" stroke="#7a0808" stroke-width=".5"/><path d="M5 4.300l1.800-4h2.600l.9 4z" fill="#1830c8" stroke="#081060" stroke-width=".5"/><circle cx="8" cy="7.500" r="2.900" fill="#10b830" stroke="#085818" stroke-width=".5"/><circle cx="7.300" cy="6.800" r="1" fill="#60e080" opacity=".7"/></svg><div class="dt" style="left:344px;top:303px">Char Reserved8</div><div class="a" style="left:313px;top:324px;width:11px;height:0;border-top:1px dotted #8a868a"></div><svg style="left:325.500px;top:318px" width="12" height="11"><path d="M4 4.500l2.500-1v5.500l-2.500-1z" fill="#101010"/><ellipse cx="8.600" cy="8.200" rx="3" ry="2.600" fill="#102010"/><path d="M.4 3v6.500l4.600-3.250z" fill="#e01010" stroke="#7a0808" stroke-width=".5"/><path d="M5 4.300l1.800-4h2.600l.9 4z" fill="#1830c8" stroke="#081060" stroke-width=".5"/><circle cx="8" cy="7.500" r="2.900" fill="#10b830" stroke="#085818" stroke-width=".5"/><circle cx="7.300" cy="6.800" r="1" fill="#60e080" opacity=".7"/></svg><div class="dt" style="left:344px;top:319px">Char Reserved9</div><div class="a" style="left:313px;top:340px;width:11px;height:0;border-top:1px dotted #8a868a"></div><svg style="left:325.500px;top:334px" width="12" height="11"><path d="M4 4.500l2.500-1v5.500l-2.500-1z" fill="#101010"/><ellipse cx="8.600" cy="8.200" rx="3" ry="2.600" fill="#102010"/><path d="M.4 3v6.500l4.600-3.250z" fill="#e01010" stroke="#7a0808" stroke-width=".5"/><path d="M5 4.300l1.800-4h2.600l.9 4z" fill="#1830c8" stroke="#081060" stroke-width=".5"/><circle cx="8" cy="7.500" r="2.900" fill="#10b830" stroke="#085818" stroke-width=".5"/><circle cx="7.300" cy="6.800" r="1" fill="#60e080" opacity=".7"/></svg><div class="dt" style="left:344px;top:335px">Char Reserved10</div><div class="a" style="left:313px;top:356px;width:11px;height:0;border-top:1px dotted #8a868a"></div><svg style="left:325.500px;top:350px" width="12" height="11"><path d="M4 4.500l2.500-1v5.500l-2.500-1z" fill="#101010"/><ellipse cx="8.600" cy="8.200" rx="3" ry="2.600" fill="#102010"/><path d="M.4 3v6.500l4.600-3.250z" fill="#e01010" stroke="#7a0808" stroke-width=".5"/><path d="M5 4.300l1.800-4h2.600l.9 4z" fill="#1830c8" stroke="#081060" stroke-width=".5"/><circle cx="8" cy="7.500" r="2.900" fill="#10b830" stroke="#085818" stroke-width=".5"/><circle cx="7.300" cy="6.800" r="1" fill="#60e080" opacity=".7"/></svg><div class="dt" style="left:344px;top:351px">Numeric Reserved1</div><div class="a" style="left:313px;top:372px;width:11px;height:0;border-top:1px dotted #8a868a"></div><svg style="left:325.500px;top:366px" width="12" height="11"><path d="M4 4.500l2.500-1v5.500l-2.500-1z" fill="#101010"/><ellipse cx="8.600" cy="8.200" rx="3" ry="2.600" fill="#102010"/><path d="M.4 3v6.500l4.600-3.250z" fill="#e01010" stroke="#7a0808" stroke-width=".5"/><path d="M5 4.300l1.800-4h2.600l.9 4z" fill="#1830c8" stroke="#081060" stroke-width=".5"/><circle cx="8" cy="7.500" r="2.900" fill="#10b830" stroke="#085818" stroke-width=".5"/><circle cx="7.300" cy="6.800" r="1" fill="#60e080" opacity=".7"/></svg><div class="dt" style="left:344px;top:367px">Numeric Reserved2</div><div class="a" style="left:313px;top:388px;width:11px;height:0;border-top:1px dotted #8a868a"></div><svg style="left:325.500px;top:382px" width="12" height="11"><path d="M4 4.500l2.500-1v5.500l-2.500-1z" fill="#101010"/><ellipse cx="8.600" cy="8.200" rx="3" ry="2.600" fill="#102010"/><path d="M.4 3v6.500l4.600-3.250z" fill="#e01010" stroke="#7a0808" stroke-width=".5"/><path d="M5 4.300l1.800-4h2.600l.9 4z" fill="#1830c8" stroke="#081060" stroke-width=".5"/><circle cx="8" cy="7.500" r="2.900" fill="#10b830" stroke="#085818" stroke-width=".5"/><circle cx="7.300" cy="6.800" r="1" fill="#60e080" opacity=".7"/></svg><div class="dt" style="left:344px;top:383px">Numeric Reserved3</div><div class="a" style="left:313px;top:404px;width:11px;height:0;border-top:1px dotted #8a868a"></div><svg style="left:325.500px;top:398px" width="12" height="11"><path d="M4 4.500l2.500-1v5.500l-2.500-1z" fill="#101010"/><ellipse cx="8.600" cy="8.200" rx="3" ry="2.600" fill="#102010"/><path d="M.4 3v6.500l4.600-3.250z" fill="#e01010" stroke="#7a0808" stroke-width=".5"/><path d="M5 4.300l1.800-4h2.600l.9 4z" fill="#1830c8" stroke="#081060" stroke-width=".5"/><circle cx="8" cy="7.500" r="2.900" fill="#10b830" stroke="#085818" stroke-width=".5"/><circle cx="7.300" cy="6.800" r="1" fill="#60e080" opacity=".7"/></svg><div class="dt" style="left:344px;top:399px">Date Reserved1</div><div class="a" style="left:313px;top:420px;width:11px;height:0;border-top:1px dotted #8a868a"></div><svg style="left:325.500px;top:414px" width="12" height="11"><path d="M4 4.500l2.500-1v5.500l-2.500-1z" fill="#101010"/><ellipse cx="8.600" cy="8.200" rx="3" ry="2.600" fill="#102010"/><path d="M.4 3v6.500l4.600-3.250z" fill="#e01010" stroke="#7a0808" stroke-width=".5"/><path d="M5 4.300l1.800-4h2.600l.9 4z" fill="#1830c8" stroke="#081060" stroke-width=".5"/><circle cx="8" cy="7.500" r="2.900" fill="#10b830" stroke="#085818" stroke-width=".5"/><circle cx="7.300" cy="6.800" r="1" fill="#60e080" opacity=".7"/></svg><div class="dt" style="left:344px;top:415px">Date Reserved2</div><div class="a" style="left:313px;top:436px;width:11px;height:0;border-top:1px dotted #8a868a"></div><svg style="left:325.500px;top:430px" width="12" height="11"><path d="M4 4.500l2.500-1v5.500l-2.500-1z" fill="#101010"/><ellipse cx="8.600" cy="8.200" rx="3" ry="2.600" fill="#102010"/><path d="M.4 3v6.500l4.600-3.250z" fill="#e01010" stroke="#7a0808" stroke-width=".5"/><path d="M5 4.300l1.800-4h2.600l.9 4z" fill="#1830c8" stroke="#081060" stroke-width=".5"/><circle cx="8" cy="7.500" r="2.900" fill="#10b830" stroke="#085818" stroke-width=".5"/><circle cx="7.300" cy="6.800" r="1" fill="#60e080" opacity=".7"/></svg><div class="dt" style="left:344px;top:431px">Tax Address 1</div><div class="a" style="left:313px;top:452px;width:11px;height:0;border-top:1px dotted #8a868a"></div><svg style="left:325.500px;top:446px" width="12" height="11"><path d="M4 4.500l2.500-1v5.500l-2.500-1z" fill="#101010"/><ellipse cx="8.600" cy="8.200" rx="3" ry="2.600" fill="#102010"/><path d="M.4 3v6.500l4.600-3.250z" fill="#e01010" stroke="#7a0808" stroke-width=".5"/><path d="M5 4.300l1.800-4h2.600l.9 4z" fill="#1830c8" stroke="#081060" stroke-width=".5"/><circle cx="8" cy="7.500" r="2.900" fill="#10b830" stroke="#085818" stroke-width=".5"/><circle cx="7.300" cy="6.800" r="1" fill="#60e080" opacity=".7"/></svg><div class="dt" style="left:344px;top:447px">Tax Address 2</div><div class="a" style="left:313px;top:468px;width:11px;height:0;border-top:1px dotted #8a868a"></div><svg style="left:325.500px;top:462px" width="12" height="11"><path d="M4 4.500l2.500-1v5.500l-2.500-1z" fill="#101010"/><ellipse cx="8.600" cy="8.200" rx="3" ry="2.600" fill="#102010"/><path d="M.4 3v6.500l4.600-3.250z" fill="#e01010" stroke="#7a0808" stroke-width=".5"/><path d="M5 4.300l1.800-4h2.600l.9 4z" fill="#1830c8" stroke="#081060" stroke-width=".5"/><circle cx="8" cy="7.500" r="2.900" fill="#10b830" stroke="#085818" stroke-width=".5"/><circle cx="7.300" cy="6.800" r="1" fill="#60e080" opacity=".7"/></svg><div class="a" style="left:343px;top:460px;width:21px;height:16px;background:#3399ff;border:1px dotted #14285a"></div><div class="dt" style="left:345px;top:463px;color:#fff">NIK</div>
<!-- tree scrollbar -->
<div class="a" style="left:510px;top:252px;width:16px;height:226px;background:#f4f3f5"></div>
<svg style="left:514px;top:259px" width="8" height="5"><path d="M0 4.500h8l-4-4.500z" fill="#404040"/></svg>
<svg style="left:514px;top:467px" width="8" height="5"><path d="M0 0h8l-4 4.500z" fill="#404040"/></svg>
<div class="a" style="left:510px;top:445px;width:15px;height:15px;background:linear-gradient(90deg,#f6f6f8,#fff 30%,#d6d6dc 72%,#eeeef2);border:1px solid #9c9ca2;border-radius:2px"></div>
<!-- combo -->
<div class="sunk" style="left:539px;top:252px;width:205px;height:21px;background:#fff"></div>
<svg style="left:544px;top:255px" width="15" height="14" shape-rendering="crispEdges"><rect x=".5" y=".5" width="14" height="13" fill="#fff" stroke="#404040"/><rect x="1" y="1" width="13" height="3" fill="#000080"/><path d="M2 6.500h3M6 6.500h7M2 8.500h3M6 8.500h7M2 10.500h3M6 10.500h7" stroke="#606060"/></svg>
<div class="dt" style="left:562px;top:256px">DialogForm.qrySIARInv</div>
<div class="a" style="left:726px;top:254px;width:16px;height:17px;background:#f7f3f6;border:1px solid;border-color:#fff #6a666a #6a666a #fff"></div>
<svg style="left:731px;top:261px" width="8" height="5"><path d="M0 0h8l-4 4.500z" fill="#000"/></svg>
<!-- list -->
<div class="sunk" style="left:539px;top:281px;width:205px;height:198px;background:#fff"></div>
<svg style="left:545px;top:283px" width="12" height="11" shape-rendering="crispEdges"><rect x=".5" y=".5" width="7" height="6" fill="#fff" stroke="#000"/><rect x="1" y="1" width="6" height="2" fill="#000080"/><rect x="3.500" y="5.500" width="8" height="5" fill="#fff" stroke="#000"/><path d="M5 7.500h5" stroke="#404040"/></svg><div class="dt" style="left:561px;top:283px;letter-spacing:-.5px">CHRRESERVED5</div><svg style="left:545px;top:298px" width="12" height="11" shape-rendering="crispEdges"><rect x=".5" y=".5" width="7" height="6" fill="#fff" stroke="#000"/><rect x="1" y="1" width="6" height="2" fill="#000080"/><rect x="3.500" y="5.500" width="8" height="5" fill="#fff" stroke="#000"/><path d="M5 7.500h5" stroke="#404040"/></svg><div class="dt" style="left:561px;top:298px;letter-spacing:-.5px">CHRRESERVED6</div><svg style="left:545px;top:313px" width="12" height="11" shape-rendering="crispEdges"><rect x=".5" y=".5" width="7" height="6" fill="#fff" stroke="#000"/><rect x="1" y="1" width="6" height="2" fill="#000080"/><rect x="3.500" y="5.500" width="8" height="5" fill="#fff" stroke="#000"/><path d="M5 7.500h5" stroke="#404040"/></svg><div class="dt" style="left:561px;top:313px;letter-spacing:-.5px">CHRRESERVED7</div><svg style="left:545px;top:328px" width="12" height="11" shape-rendering="crispEdges"><rect x=".5" y=".5" width="7" height="6" fill="#fff" stroke="#000"/><rect x="1" y="1" width="6" height="2" fill="#000080"/><rect x="3.500" y="5.500" width="8" height="5" fill="#fff" stroke="#000"/><path d="M5 7.500h5" stroke="#404040"/></svg><div class="dt" style="left:561px;top:328px;letter-spacing:-.5px">CHRRESERVED8</div><svg style="left:545px;top:343px" width="12" height="11" shape-rendering="crispEdges"><rect x=".5" y=".5" width="7" height="6" fill="#fff" stroke="#000"/><rect x="1" y="1" width="6" height="2" fill="#000080"/><rect x="3.500" y="5.500" width="8" height="5" fill="#fff" stroke="#000"/><path d="M5 7.500h5" stroke="#404040"/></svg><div class="dt" style="left:561px;top:343px;letter-spacing:-.5px">CHRRESERVED9</div><svg style="left:545px;top:358px" width="12" height="11" shape-rendering="crispEdges"><rect x=".5" y=".5" width="7" height="6" fill="#fff" stroke="#000"/><rect x="1" y="1" width="6" height="2" fill="#000080"/><rect x="3.500" y="5.500" width="8" height="5" fill="#fff" stroke="#000"/><path d="M5 7.500h5" stroke="#404040"/></svg><div class="dt" style="left:561px;top:358px;letter-spacing:-.5px">CHRRESERVED10</div><svg style="left:545px;top:373px" width="12" height="11" shape-rendering="crispEdges"><rect x=".5" y=".5" width="7" height="6" fill="#fff" stroke="#000"/><rect x="1" y="1" width="6" height="2" fill="#000080"/><rect x="3.500" y="5.500" width="8" height="5" fill="#fff" stroke="#000"/><path d="M5 7.500h5" stroke="#404040"/></svg><div class="dt" style="left:561px;top:373px;letter-spacing:-.5px">CURRRESERVED1</div><svg style="left:545px;top:388px" width="12" height="11" shape-rendering="crispEdges"><rect x=".5" y=".5" width="7" height="6" fill="#fff" stroke="#000"/><rect x="1" y="1" width="6" height="2" fill="#000080"/><rect x="3.500" y="5.500" width="8" height="5" fill="#fff" stroke="#000"/><path d="M5 7.500h5" stroke="#404040"/></svg><div class="dt" style="left:561px;top:388px;letter-spacing:-.5px">CURRRESERVED2</div><svg style="left:545px;top:403px" width="12" height="11" shape-rendering="crispEdges"><rect x=".5" y=".5" width="7" height="6" fill="#fff" stroke="#000"/><rect x="1" y="1" width="6" height="2" fill="#000080"/><rect x="3.500" y="5.500" width="8" height="5" fill="#fff" stroke="#000"/><path d="M5 7.500h5" stroke="#404040"/></svg><div class="dt" style="left:561px;top:403px;letter-spacing:-.5px">CURRRESERVED3</div><svg style="left:545px;top:418px" width="12" height="11" shape-rendering="crispEdges"><rect x=".5" y=".5" width="7" height="6" fill="#fff" stroke="#000"/><rect x="1" y="1" width="6" height="2" fill="#000080"/><rect x="3.500" y="5.500" width="8" height="5" fill="#fff" stroke="#000"/><path d="M5 7.500h5" stroke="#404040"/></svg><div class="dt" style="left:561px;top:418px;letter-spacing:-.5px">DATERESERVED1</div><svg style="left:545px;top:433px" width="12" height="11" shape-rendering="crispEdges"><rect x=".5" y=".5" width="7" height="6" fill="#fff" stroke="#000"/><rect x="1" y="1" width="6" height="2" fill="#000080"/><rect x="3.500" y="5.500" width="8" height="5" fill="#fff" stroke="#000"/><path d="M5 7.500h5" stroke="#404040"/></svg><div class="dt" style="left:561px;top:433px;letter-spacing:-.5px">DATERESERVED2</div><svg style="left:545px;top:448px" width="12" height="11" shape-rendering="crispEdges"><rect x=".5" y=".5" width="7" height="6" fill="#fff" stroke="#000"/><rect x="1" y="1" width="6" height="2" fill="#000080"/><rect x="3.500" y="5.500" width="8" height="5" fill="#fff" stroke="#000"/><path d="M5 7.500h5" stroke="#404040"/></svg><div class="dt" style="left:561px;top:448px;letter-spacing:-.35px">SNLIST</div><div class="a" style="left:541px;top:460px;width:187px;height:15px;background:#3399ff"></div><svg style="left:545px;top:462px" width="12" height="11" shape-rendering="crispEdges"><rect x=".5" y=".5" width="7" height="6" fill="#fff" stroke="#000"/><rect x="1" y="1" width="6" height="2" fill="#000080"/><rect x="3.500" y="5.500" width="8" height="5" fill="#fff" stroke="#000"/><path d="M5 7.500h5" stroke="#404040"/></svg><div class="dt" style="left:561px;top:462px;color:#fff;letter-spacing:-.35px">NIK</div>
<div class="a" style="left:728px;top:283px;width:15px;height:194px;background:#f4f3f5"></div>
<svg style="left:732px;top:287px" width="8" height="5"><path d="M0 4.500h8l-4-4.500z" fill="#404040"/></svg>
<svg style="left:732px;top:467px" width="8" height="5"><path d="M0 0h8l-4 4.500z" fill="#404040"/></svg>
<div class="a" style="left:728px;top:444px;width:15px;height:13px;background:linear-gradient(90deg,#f6f6f8,#fff 30%,#d6d6dc 72%,#eeeef2);border:1px solid #9c9ca2;border-radius:2px"></div>
<!-- tool icons -->
<svg style="left:287px;top:485px" width="17" height="17"><path d="M5.500 4.500h4l1.500 1.500h4.500v8h-10z" fill="#f7f3f6" stroke="#000" stroke-width="1" shape-rendering="crispEdges"/><path d="M1 1l6 6M7 1l-6 6M4 0v8M0 4h8" stroke="#909090" stroke-width=".8"/></svg>
<svg style="left:310px;top:485px" width="17" height="17"><path d="M1 1l6 6M7 1l-6 6M4 0v8M0 4h8" stroke="#808080" stroke-width=".8"/><path d="M5.500 6.500v6l4-3z" fill="#505050"/><path d="M10.500 3.500l2.500 4h-5z" fill="#303030"/><circle cx="12" cy="11" r="3" fill="#404040"/><path d="M9 9.500l2 1" stroke="#202020"/></svg>
<svg style="left:340px;top:486px" width="13" height="14" shape-rendering="crispEdges"><rect x=".5" y="3.500" width="8" height="9" fill="#fff" stroke="#000"/><path d="M2 6.500h5M2 8.500h5M2 10.500h5" stroke="#606060"/><rect x="5.500" y=".5" width="7" height="6" fill="#404040" stroke="#000"/><path d="M7 2.500h4" stroke="#fff"/></svg>
<svg style="left:359px;top:486px" width="14" height="14"><path d="M1 1l11 12M12 1l-11 12" stroke="#000" stroke-width="1.600"/></svg>
<svg style="left:384px;top:485px" width="17" height="17"><g shape-rendering="crispEdges"><rect x="2.500" y="3.500" width="13" height="12" fill="#fff" stroke="#000"/><path d="M4 6.500h10M4 8.500h10M4 10.500h10M4 12.500h10" stroke="#505050"/></g><path d="M2 1l8 9-1 2-2-.5-7-8.500z" fill="#303030" stroke="#000" stroke-width=".6"/></svg>
<!-- expression -->
<div class="a" style="left:284px;top:516px;width:12px;height:12px;background:#fff;border:1px solid;border-color:#6a666a #e4e0e4 #e4e0e4 #6a666a"></div>
<div class="dt" style="left:302px;top:516px">E<u>x</u>pression</div>
<div class="sunk" style="left:283px;top:534px;width:461px;height:20px"></div>
<div class="a" style="left:727px;top:536px;width:16px;height:16px;border:1px solid;border-color:#fff #8a868a #8a868a #fff"></div>
<div class="t" style="left:731px;top:538px;font-family:'Liberation Serif',serif;font-style:italic;font-size:12px;color:#a9a5a9">fx</div>
<div class="a" style="left:274px;top:561px;width:475px;height:2px;border-top:1px solid #706c70;border-bottom:1px solid #fff"></div>
<!-- buttons -->
<div class="a" style="left:603px;top:569px;width:74px;height:22px;border-right:2px solid #8a868a;border-left:1px solid #fbf9fb;border-top:1px solid #fbf9fb"></div>
<div class="dt" style="left:631px;top:576px;letter-spacing:0">OK</div>
<div class="dt" style="left:702px;top:576px;letter-spacing:-.2px">Cancel</div>
<!-- annotations -->
<div class="ann" style="left:530px;top:241px;width:219px;height:40px"></div>
<div class="ann" style="left:531px;top:451px;width:215px;height:31px"></div>
<div class="ann" style="left:581px;top:564px;width:111px;height:39px"></div>
<svg style="left:292px;top:470px" width="52" height="46"><ellipse cx="25.300" cy="22.300" rx="21" ry="16.700" fill="none" stroke="#f6ea1c" stroke-width="4.200"/></svg>
<svg style="left:312px;top:450px" width="76" height="38"><ellipse cx="37.850" cy="18.700" rx="30.200" ry="13" fill="none" stroke="#22a746" stroke-width="5"/></svg>
</div>
</body>
</html>
